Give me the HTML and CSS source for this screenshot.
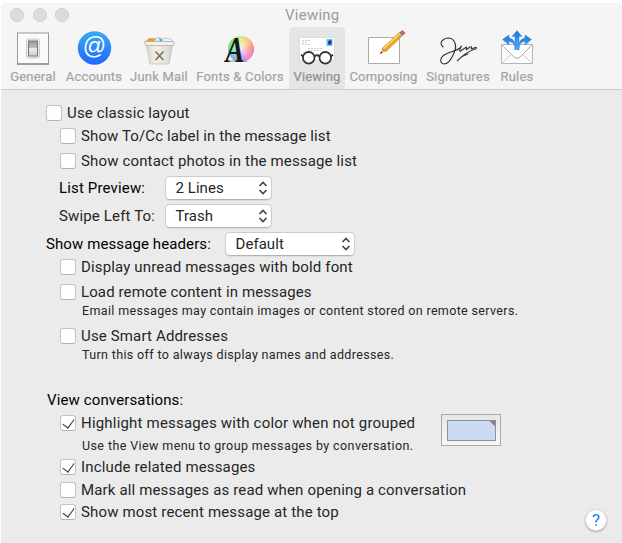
FILE: index.html
```
<!DOCTYPE html>
<html lang="en">
<head>
<meta charset="utf-8">
<title>Viewing</title>
<link rel="stylesheet" href="styles.css">
</head>
<body>
<div class="window">
<header class="toolbar">
  <div class="titlebar"><div class="lights"><i></i><i></i><i></i></div><h1>Viewing</h1></div>
  <nav class="tabs">
    <div class="tab general"><svg width="36" height="36" viewBox="0 0 36 36"><defs><linearGradient id="sw" x2="0" y2="1"><stop stop-color="#999"/><stop offset=".45" stop-color="#bbb"/><stop offset=".5" stop-color="#eee"/><stop offset="1" stop-color="#ccc"/></linearGradient></defs><rect x="2.5" y="3" width="31" height="31" fill="#fafafa" stroke="#999"/><path d="M2 34h32" stroke="#777"/><rect x="11.5" y="9" width="13" height="19" rx="2" fill="#eee" stroke="#ccc"/><rect x="13.5" y="11" width="9" height="15" fill="url(#sw)" stroke="#777"/></svg><span>General</span></div>
    <div class="tab accounts"><svg width="36" height="36" viewBox="0 0 36 36"><defs><linearGradient id="bl" x2="0" y2="1"><stop stop-color="#35adf5"/><stop offset="1" stop-color="#2266fa"/></linearGradient></defs><circle cx="18.5" cy="18" r="16.7" fill="url(#bl)"/><text x="18.5" y="23.5" text-anchor="middle" class="at">@</text></svg><span>Accounts</span></div>
    <div class="tab junk"><svg width="36" height="36" viewBox="0 0 36 36"><defs><linearGradient id="bin" x2="1" y2="0"><stop stop-color="#d8d8cf"/><stop offset=".35" stop-color="#f4eedf"/><stop offset=".75" stop-color="#e3e3dc"/><stop offset="1" stop-color="#c9c9c6"/></linearGradient></defs><path d="M4 12l4-4 9 .5-1 4z" fill="#ec9c3e"/><path d="M13 11l4-4 4 2 3-1 6 1 2 3z" fill="#eef3f5" stroke="#a9b5b9" stroke-width=".7"/><path d="M18 8l4 2-3 2z" fill="#4fa7d4"/><path d="M5 13h27l-4 21H9z" fill="url(#bin)" stroke="#bbb" stroke-width=".7"/><path d="M3.500 11.500h29.500l-.5 4h-28z" fill="#f2f1ec" stroke="#aaa" stroke-width=".7"/><path d="M14.500 21.500l8 8.500m0-8.500l-8 8.500" stroke="#77736b" stroke-width="1.600"/></svg><span>Junk Mail</span></div>
    <div class="tab fonts"><div class="wheel"><svg width="36" height="36" viewBox="0 0 36 36"><path d="M2 32Q14 27 28 32z" fill="#666" opacity=".4"/><text transform="translate(3.500 31.500) scale(1 1.260)" class="glyph">A</text></svg></div><span>Fonts &amp; Colors</span></div>
    <div class="tab viewing"><svg width="36" height="36" viewBox="0 0 36 36"><path d="M.5 7.500h35v23H.5z" fill="#fff" stroke="#ddd"/><path d="M3 10.500h8m-8 2h6m-6 2h8M9 18.500h14m-14 2h12" stroke="#ccc" stroke-dasharray="2 1"/><rect x="27.500" y="9" width="6" height="7" fill="#72bff5"/><path d="M29 11l3.500-1v4l-3 1z" fill="#183c78"/><g fill="#fff" fill-opacity=".75" stroke="#343434" stroke-width="1.800"><circle cx="9.700" cy="27.800" r="5.800"/><circle cx="26.300" cy="27.800" r="5.800"/><path d="M15.500 26.300q2.500-2 5 0M2 24.800l2 1.500m28 0l2-1.500" fill="none"/></g></svg><span>Viewing</span></div>
    <div class="tab composing"><svg width="38" height="36" viewBox="0 0 38 36"><path d="M3.500 7.500h31v26h-31z" fill="#fff" stroke="#aaa"/><path d="M15 24l2.500-6 4 3z" fill="#dcae80"/><path d="M17 18.500L34.500 2.500l3 3L21 21.500z" fill="#e9aa2c" stroke="#ad7626" stroke-width=".6"/><path d="M18.500 18.500L35 3.500" stroke="#ffdd62" stroke-width="1.300"/><path d="M35 2l3 3" stroke="#6696ad" stroke-width="2"/><path d="M37.500 0l3 3-2 2-3-3z" fill="#d7527d"/><path d="M15 24l1-2.500 1.500 1.200z" fill="#333"/></svg><span>Composing</span></div>
    <div class="tab signatures"><svg width="38" height="36" viewBox="0 0 38 36"><path d="M4 17C-1 12 5 8 10 8c7 1 8 9 5 15-2 5-5 11-10 11-6-1-3-8 2-10 6-3 11-3 15-7 1-2 0-1-1 2-1 2 0 3 2 1l3-2c2-2 2 0 1 2l4-3c2-1 2 1 1 2l3-1c3-2 3 1 1 1-6 2-13 7-18 12 4-4 7-6 11-7" fill="none" stroke="#333" stroke-width="1.100" stroke-linecap="round"/></svg><span>Signatures</span></div>
    <div class="tab rules"><svg width="36" height="36" viewBox="0 0 36 36"><defs><linearGradient id="ar" x2="0" y2="1"><stop stop-color="#1b72da"/><stop offset="1" stop-color="#55b6fa"/></linearGradient></defs><path d="M2.500 14.500h31v19h-31z" fill="#fbfbfb" stroke="#b5b5b5"/><path d="M3 33l11-10m8 0l11 10" fill="none" stroke="#ccc"/><path d="M3 15l12 12q3 3 6 0l12-12" fill="#fff" stroke="#aaa"/><g fill="url(#ar)" stroke="#2c7dd0" stroke-width=".4"><path d="M18 .500l5 6h-3v13h-4v-13h-3z"/><path d="M16 20c0-6-2-8-6-8.500v3.500l-6.500-5.500L10 5v3c5 1 7 5 7 12z"/><path d="M20 20c0-6 2-8 6-8.500v3.500l6.500-5.500L26 5v3c-5 1-7 5-7 12z"/></g></svg><span>Rules</span></div>
  </nav>
</header>
<main class="pane">
  <label class="row"><i class="box"></i><span>Use classic layout</span></label>
  <label class="row in"><i class="box"></i><span class="tight">Show To/Cc label in the message list</span></label>
  <label class="row in"><i class="box"></i><span>Show contact photos in the message list</span></label>
  <div class="row in dark"><span class="name">List Preview:</span><div class="select">2 Lines<svg width="10" height="14" viewBox="0 0 10 14"><path d="M1.500 5L5 1.500 8.500 5m-7 4L5 12.500 8.500 9"/></svg></div></div>
  <div class="row in"><span class="name">Swipe Left To:</span><div class="select">Trash<svg width="10" height="14" viewBox="0 0 10 14"><path d="M1.500 5L5 1.500 8.500 5m-7 4L5 12.500 8.500 9"/></svg></div></div>
  <div class="row dark"><span class="headers">Show message headers:</span><div class="select wide">Default<svg width="10" height="14" viewBox="0 0 10 14"><path d="M1.500 5L5 1.500 8.500 5m-7 4L5 12.500 8.500 9"/></svg></div></div>
  <label class="row in"><i class="box"></i><span>Display unread messages with bold font</span></label>
  <label class="row in"><i class="box"></i><span class="tight">Load remote content in messages</span></label>
  <p class="row note">Email messages may contain images or content stored on remote servers.</p>
  <label class="row in"><i class="box"></i><span>Use Smart Addresses</span></label>
  <p class="row note">Turn this off to always display names and addresses.</p>
  <h2 class="row dark">View conversations:</h2>
  <label class="row in"><i class="box on"></i><span class="loose">Highlight messages with color when not grouped</span></label>
  <p class="row note loose-note">Use the View menu to group messages by conversation.</p>
  <label class="row in"><i class="box on"></i><span>Include related messages</span></label>
  <label class="row in"><i class="box"></i><span>Mark all messages as read when opening a conversation</span></label>
  <label class="row in"><i class="box on"></i><span>Show most recent message at the top</span></label>
  <div class="well"><div class="swatch"></div></div>
  <div class="help">?</div>
</main>
</div>
</body>
</html>
```
FILE: styles.css
```
* { box-sizing: border-box; }
body { margin: 0; background: #fff; font: 15px/20px Roboto, sans-serif; color: #262626; letter-spacing: .15px; }
.window { margin: 3px 0 0 1px; height: 540px; border-radius: 5px 5px 0 0; background: #ebebeb; overflow: hidden; }
.toolbar { height: 87px; background: #f5f5f5; border-bottom: 1px solid #cbcbcb; color: #9b9b9b; }
.titlebar { height: 23px; margin-bottom: 1px; display: flex; align-items: center; }
.lights { display: flex; gap: 8.700px; padding-left: 9px; width: 284px; }
.lights i { width: 14px; height: 14px; border-radius: 50%; background: #dcdcdc; border: 1px solid #cfcfcf; }
h1 { margin: 0; font-size: 15px; font-weight: 400; letter-spacing: .25px; }
.tabs { display: flex; }
.tab { height: 62px; display: flex; flex-direction: column; align-items: center; padding-top: 3px; font-size: 13px; line-height: 20px; white-space: nowrap; color: #a3a3a3; letter-spacing: .2px; -webkit-text-stroke: .2px; }
.tab svg { display: block; flex: none; overflow: visible; }
.tab span { margin-top: 1px; }
.general { width: 64px; }
.accounts { width: 58px; }
.junk { width: 72px; }
.fonts { width: 90px; }
.viewing { width: 56px; margin-left: 4px; background: #e5e5e5; border-radius: 4px 4px 0 0; color: #8f8f8f; }
.composing { width: 77px; }
.signatures { width: 72px; }
.rules { width: 46px; }
.at { font: 23px "Liberation Sans", sans-serif; fill: #fff; stroke: none; letter-spacing: 0; }
.wheel { width: 36px; height: 36px; position: relative; }
.wheel::before { content: ""; position: absolute; left: 6px; top: 6px; width: 26px; height: 26px; border-radius: 50%; background: radial-gradient(circle, #ffffffcc 0, #ffffff22 12px, transparent 14px), conic-gradient(#d5e776, #ffb85b, #f16f79, #ee72c3, #9174ee, #54aef1, #48dc9c, #70e653, #d5e776); }
.wheel svg { position: relative; }
.glyph { font: italic bold 28px "Liberation Serif", serif; fill: #171717; stroke: none; letter-spacing: 0; }
.pane { display: grid; grid-template-columns: 395px 1fr; grid-template-rows: 23px 25px 27px 28px 28px 23px 25px 19px 25px 19px 45px 23px 23px 21px 23px 22px 28px; padding: 13px 0 0 45px; height: 453px; }
.row { grid-column: 1; height: 20px; display: flex; align-items: center; margin: 0; white-space: nowrap; }
.in { padding-left: 14px; }
.dark { color: #000; }
.tight { letter-spacing: .115px; }
.loose { letter-spacing: .19px; }
h2 { padding-left: 1px; font-size: 15px; font-weight: 400; letter-spacing: .13px; }
.box { flex: none; width: 16px; height: 16px; margin-right: 5px; background: #fff; border: 1px solid #c3c3c3; border-bottom-color: #b3b3b3; border-radius: 3px; display: flex; justify-content: center; }
.on::after { content: ""; width: 5.500px; height: 10px; margin-top: 1px; border: solid #333; border-width: 0 1.800px 1.800px 0; transform: translateY(-.5px) rotate(36deg); }
.name { width: 106px; margin-left: -1px; letter-spacing: .15px; }
.headers { width: 179px; letter-spacing: .1px; }
.name + .select { width: 107px; }
.select { height: 24px; flex: none; display: flex; align-items: center; justify-content: space-between; padding: 0 3px 0 9.500px; color: #262626; background: #fff; border: 1px solid #ccc; border-bottom-color: #b3b3b3; border-radius: 5px; box-shadow: 0 1px 1px #0001; letter-spacing: .05px; }
.wide { width: 130px; }
.select svg { fill: none; stroke: #444; stroke-width: 1.600; }
.note { padding-left: 36px; font-size: 12.500px; letter-spacing: .35px; }
.loose-note { letter-spacing: .4px; }
.well { grid-column: 2; grid-row: 13 / span 2; width: 60px; height: 32px; margin-top: 1px; padding: 5px; border: 1px solid #aaa; background: linear-gradient(#e6e6e6, #f7f7f7); }
.swatch { height: 21px; width: 49px; border: 1px solid #919191; background: linear-gradient(45deg, transparent 0 91%, #858585 91%) #cadaf2; }
.help { grid-column: 2; grid-row: 17; justify-self: end; width: 22px; height: 22px; margin: 7px 15px 0 0; border-radius: 50%; background: #fff; border: 1px solid #ddd; box-shadow: 0 1px 2px #0004; color: #1683f7; font-size: 17px; line-height: 21px; text-align: center; letter-spacing: 0; }
```
